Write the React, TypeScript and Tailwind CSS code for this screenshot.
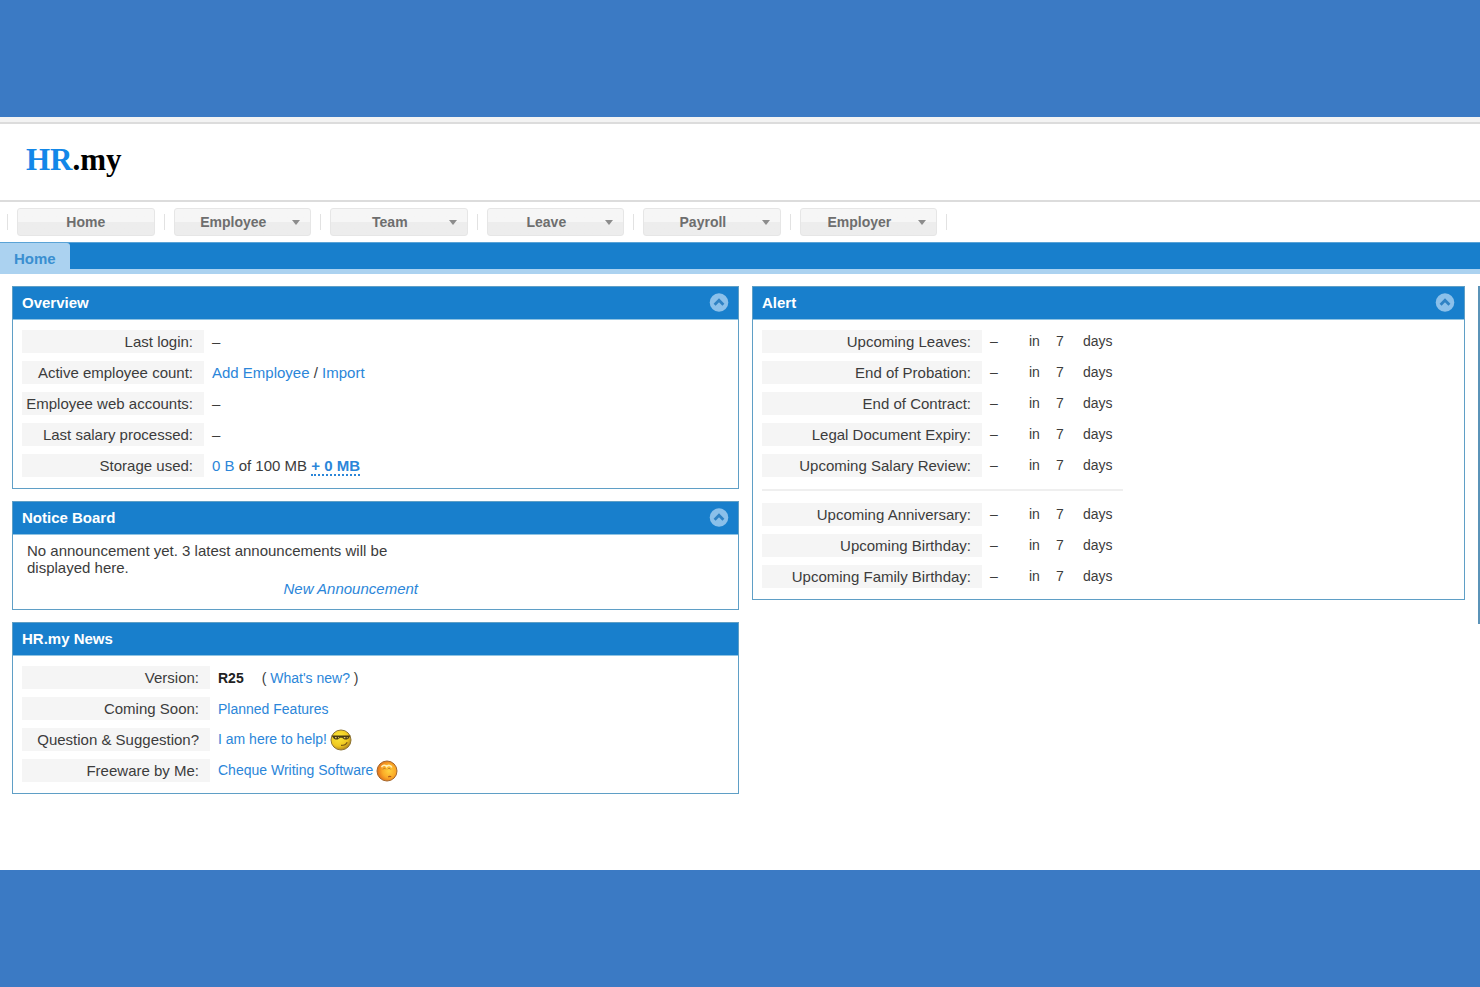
import React, { useState } from 'react';

const menuItems = [
  { label: 'Home', hasMenu: false },
  { label: 'Employee', hasMenu: true },
  { label: 'Team', hasMenu: true },
  { label: 'Leave', hasMenu: true },
  { label: 'Payroll', hasMenu: true },
  { label: 'Employer', hasMenu: true },
];

const workAlerts = [
  'Upcoming Leaves:',
  'End of Probation:',
  'End of Contract:',
  'Legal Document Expiry:',
  'Upcoming Salary Review:',
];

const personalAlerts = [
  'Upcoming Anniversary:',
  'Upcoming Birthday:',
  'Upcoming Family Birthday:',
];

const Link = ({ children, className = '' }: { children: React.ReactNode; className?: string }) => (
  <a href="#" className={`text-[#2b86d9] ${className}`}>
    {children}
  </a>
);

const Panel = ({
  title,
  collapsible = true,
  children,
}: {
  title: string;
  collapsible?: boolean;
  children: React.ReactNode;
}) => {
  const [open, setOpen] = useState(true);

  return (
    <section className="border border-[#5f9fc6] bg-white">
      <div className="flex h-[33px] items-center justify-between border-b border-[#8fc3e2] bg-[#187fcc] pr-[9px] pb-[2px] pl-[9px]">
        <h2 className="text-[15px] leading-[17px] font-bold text-white">{title}</h2>
        {collapsible && (
          <button type="button" aria-label={`Toggle ${title}`} onClick={() => setOpen(!open)}>
            <svg width="20" height="20" viewBox="0 0 20 20" className={open ? 'block' : 'block rotate-180'}>
              <circle cx="10" cy="10.5" r="9.3" fill="#8bc0ea" />
              <path d="M5.6 12.7 L10 8.3 L14.4 12.7" fill="none" stroke="#2f82c4" strokeWidth="2.8" />
            </svg>
          </button>
        )}
      </div>
      {open && children}
    </section>
  );
};

const Row = ({ label, children }: { label: string; children: React.ReactNode }) => (
  <tr className="h-[23px]">
    <th scope="row" className="bg-[#f5f5f5] pr-[11px] text-right font-normal whitespace-nowrap">
      {label}
    </th>
    <td className="pl-2 whitespace-nowrap">{children}</td>
  </tr>
);

const AlertRow = ({ label }: { label: string }) => (
  <tr className="h-[23px]">
    <th scope="row" className="w-[220px] bg-[#f5f5f5] pr-[11px] text-right font-normal whitespace-nowrap">
      {label}
    </th>
    <td className="w-[47px] pl-2 text-[14px]">–</td>
    <td className="w-[27px] text-[14px]">in</td>
    <td className="w-[27px] text-[14px]">7</td>
    <td className="w-[40px] text-[14px]">days</td>
  </tr>
);

const CoolFace = () => (
  <svg width="22" height="22" viewBox="0 0 22 22" className="inline-block" aria-hidden="true">
    <defs>
      <radialGradient id="cool" cx="0.4" cy="0.35" r="0.7">
        <stop offset="0" stopColor="#fbe93c" />
        <stop offset="0.65" stopColor="#f0c81e" />
        <stop offset="1" stopColor="#a97c1a" />
      </radialGradient>
    </defs>
    <circle cx="11" cy="11" r="10" fill="url(#cool)" stroke="#8d7433" strokeWidth="1" />
    <path d="M1.5 6.6 H20.5 L19 8.8 C18.4 11.2 13.4 11.2 12.4 8.8 H9.8 C9 11.2 4 11.2 3.2 8.8 Z" fill="#4a3b12" />
    <path d="M5 8.6 h1.6 M8 8.6 h.8 M13.8 8.6 h1.6 M16.8 8.6 h.8" stroke="#e6cf6a" strokeWidth="1.2" />
    <path d="M11 16.4 C14 16.4 16.2 15.4 17.2 13.2" fill="none" stroke="#7a5a12" strokeWidth="1.2" />
  </svg>
);

const ShyFace = () => (
  <svg width="22" height="22" viewBox="0 0 22 22" className="inline-block" aria-hidden="true">
    <defs>
      <radialGradient id="shy" cx="0.6" cy="0.5" r="0.6">
        <stop offset="0" stopColor="#ffd23e" />
        <stop offset="0.55" stopColor="#fbab28" />
        <stop offset="1" stopColor="#e06c18" />
      </radialGradient>
    </defs>
    <circle cx="11" cy="11" r="10" fill="url(#shy)" stroke="#a5672c" strokeWidth="1" />
    <path d="M5.5 7.2 C6.5 4.8 9.5 4.8 10.6 6.6 C12 4.8 15 5 15.8 7.4" fill="none" stroke="#fff0b8" strokeWidth="1.6" />
    <path d="M7 9.4 C7.6 8 9.2 8 9.8 9.2 M11.8 9.2 C12.4 8 14 8 14.6 9.4" fill="none" stroke="#b9742a" strokeWidth="1" />
    <path d="M12.2 17 C13.2 16.2 14.4 16.2 15.2 16.8" fill="none" stroke="#b0591a" strokeWidth="1.1" />
  </svg>
);

const App = () => {
  return (
    <div className="flex min-h-screen flex-col overflow-hidden bg-[#3b7ac4] py-[117px] font-['Liberation_Sans',Arial,sans-serif] text-[15px] leading-[17px] text-[#3c3c3c]">
      <div className="flex-grow bg-white">
        <header className="border-t-[5px] border-[#f3f3f3]">
          <div className="flex h-20 items-center border-y-2 border-[#dcdcdc] px-[26px] pb-1">
            <a href="#" className="font-['Liberation_Serif',serif] text-[31px] leading-9 font-bold text-black">
              <span className="text-[#1287e8]">HR</span>.my
            </a>
          </div>
        </header>

        <nav className="h-10">
          <ul className="flex h-full w-[64%] items-center pl-[7px]">
            {menuItems.map((item) => (
              <li key={item.label} className="flex flex-1 items-center">
                <span className="h-4 w-px bg-[#e2e2e2]" />
                <button
                  type="button"
                  className="mx-[9px] flex h-7 flex-1 items-center rounded-[3px] border border-[#e6e6e6] bg-linear-to-b from-[#f6f6f6] from-50% to-[#ededed] to-50% text-[14px] font-bold text-[#6e6e6e]"
                >
                  <span className="flex-1 text-center">{item.label}</span>
                  {item.hasMenu && (
                    <svg width="8" height="5" viewBox="0 0 8 5" className="mr-[10px]">
                      <path d="M0 0 H8 L4 5 Z" fill="#8c8c8c" />
                    </svg>
                  )}
                </button>
              </li>
            ))}
            <li className="h-4 w-px bg-[#e2e2e2]" />
          </ul>
        </nav>

        <div className="flex h-8 border-t border-b-[5px] border-t-[#5aa3d6] border-b-[#abd2f0] bg-[#187fcc]">
          <a href="#" className="flex items-center rounded-tr-[3px] bg-[#abd2f0] px-[14px] pt-1 font-bold text-[#3a8fd0]">
            Home
          </a>
        </div>

        <main className="grid grid-cols-[727fr_713fr_2fr] items-start gap-x-[13px] pt-3 pl-3">
          <div className="flex flex-col gap-3">
            <Panel title="Overview">
              <table className="mx-[9px] mt-[2px] mb-[3px] border-separate border-spacing-x-0 border-spacing-y-2">
                <colgroup>
                  <col className="w-[182px]" />
                  <col />
                </colgroup>
                <tbody>
                  <Row label="Last login:">–</Row>
                  <Row label="Active employee count:">
                    <Link>Add Employee</Link> / <Link>Import</Link>
                  </Row>
                  <Row label="Employee web accounts:">–</Row>
                  <Row label="Last salary processed:">–</Row>
                  <Row label="Storage used:">
                    <Link>0 B</Link> of 100 MB{' '}
                    <Link className="border-b-2 border-dotted border-[#2b86d9] font-bold">+ 0 MB</Link>
                  </Row>
                </tbody>
              </table>
            </Panel>

            <Panel title="Notice Board">
              <div className="max-w-[405px] pt-[7px] pb-3 pl-[14px]">
                <p>No announcement yet. 3 latest announcements will be displayed here.</p>
                <p className="mt-1 text-right italic">
                  <Link>New Announcement</Link>
                </p>
              </div>
            </Panel>

            <Panel title="HR.my News" collapsible={false}>
              <table className="mx-[9px] mt-[2px] mb-[3px] border-separate border-spacing-x-0 border-spacing-y-2">
                <colgroup>
                  <col className="w-[188px]" />
                  <col />
                </colgroup>
                <tbody>
                  <Row label="Version:">
                    <span className="text-[14px]">
                      <b className="mr-[18px] text-[#222]">R25</b>( <Link>What's new?</Link> )
                    </span>
                  </Row>
                  <Row label="Coming Soon:">
                    <Link className="text-[14px]">Planned Features</Link>
                  </Row>
                  <Row label="Question & Suggestion?">
                    <span className="flex h-[23px] items-center gap-[3px] text-[14px]">
                      <Link>I am here to help!</Link>
                      <CoolFace />
                    </span>
                  </Row>
                  <Row label="Freeware by Me:">
                    <span className="flex h-[23px] items-center gap-[3px] text-[14px]">
                      <Link>Cheque Writing Software</Link>
                      <ShyFace />
                    </span>
                  </Row>
                </tbody>
              </table>
            </Panel>
          </div>

          <Panel title="Alert">
            <table className="mx-[9px] mt-[2px] mb-[3px] border-separate border-spacing-x-0 border-spacing-y-2">
              <tbody>
                {workAlerts.map((label) => (
                  <AlertRow key={label} label={label} />
                ))}
                <tr className="h-[10px]">
                  <td colSpan={5}>
                    <hr className="border-t-2 border-[#efefef]" />
                  </td>
                </tr>
                {personalAlerts.map((label) => (
                  <AlertRow key={label} label={label} />
                ))}
              </tbody>
            </table>
          </Panel>

          <div className="h-[338px] border-l-2 border-[#5b93b8]" />
        </main>
      </div>
    </div>
  );
};

export default App;
